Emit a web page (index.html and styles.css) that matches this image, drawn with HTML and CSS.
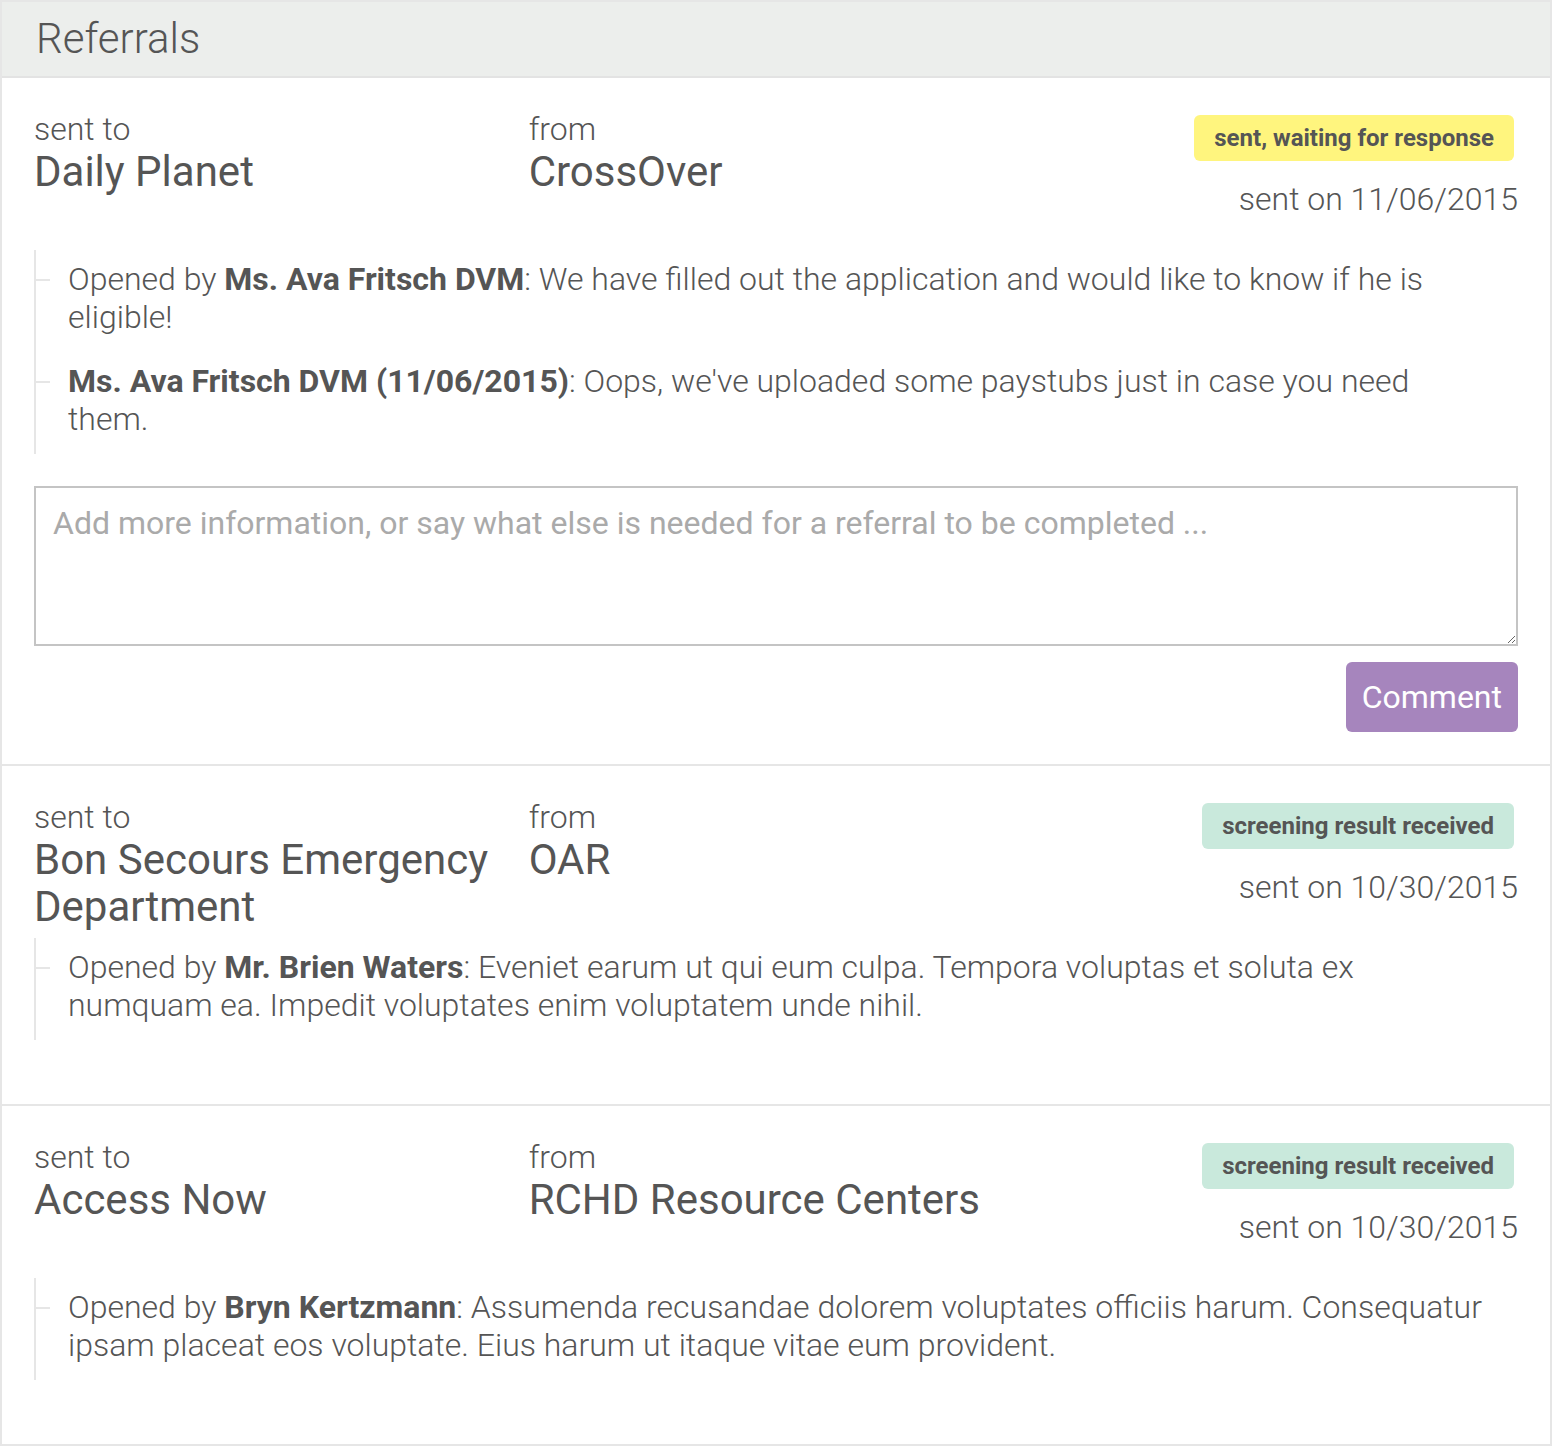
FILE: index.html
```html
<!DOCTYPE html>
<html lang="en">
<head>
<meta charset="utf-8">
<title>Referrals</title>
<link rel="stylesheet" href="styles.css">
</head>
<body>
<section class="panel">
  <header class="panel-header">Referrals</header>

  <article class="referral">
    <div class="ref-head">
      <div class="col">
        <div class="label">sent to</div>
        <div class="name">Daily Planet</div>
      </div>
      <div class="col">
        <div class="label">from</div>
        <div class="name">CrossOver</div>
      </div>
      <div class="col col-status">
        <span class="badge badge-waiting">sent, waiting for response</span>
        <div class="date">sent on 11/06/2015</div>
      </div>
    </div>
    <div class="comments">
      <p class="comment">Opened by <b>Ms. Ava Fritsch DVM</b>: We have filled out the application and would like to know if he is eligible!</p>
      <p class="comment"><b>Ms. Ava Fritsch DVM (11/06/2015)</b>: Oops, we've uploaded some paystubs just in case you need them.</p>
    </div>
    <form class="comment-form">
      <textarea class="comment-input" placeholder="Add more information, or say what else is needed for a referral to be completed ..."></textarea>
      <div class="form-actions">
        <button type="button" class="btn">Comment</button>
      </div>
    </form>
  </article>

  <article class="referral">
    <div class="ref-head">
      <div class="col">
        <div class="label">sent to</div>
        <div class="name">Bon Secours Emergency Department</div>
      </div>
      <div class="col">
        <div class="label">from</div>
        <div class="name">OAR</div>
      </div>
      <div class="col col-status">
        <span class="badge badge-received">screening result received</span>
        <div class="date">sent on 10/30/2015</div>
      </div>
    </div>
    <div class="comments">
      <p class="comment">Opened by <b>Mr. Brien Waters</b>: Eveniet earum ut qui eum culpa. Tempora voluptas et soluta ex numquam ea. Impedit voluptates enim voluptatem unde nihil.</p>
    </div>
  </article>

  <article class="referral">
    <div class="ref-head">
      <div class="col">
        <div class="label">sent to</div>
        <div class="name">Access Now</div>
      </div>
      <div class="col">
        <div class="label">from</div>
        <div class="name">RCHD Resource Centers</div>
      </div>
      <div class="col col-status">
        <span class="badge badge-received">screening result received</span>
        <div class="date">sent on 10/30/2015</div>
      </div>
    </div>
    <div class="comments">
      <p class="comment">Opened by <b>Bryn Kertzmann</b>: Assumenda recusandae dolorem voluptates officiis harum. Consequatur ipsam placeat eos voluptate. Eius harum ut itaque vitae eum provident.</p>
    </div>
  </article>
</section>
</body>
</html>
```

FILE: styles.css
```css
* {
  box-sizing: border-box;
}

html, body {
  margin: 0;
  padding: 0;
  background: #ffffff;
}

body {
  font-family: Roboto, "Liberation Sans", sans-serif;
  color: #555555;
  font-weight: 300;
}

.panel {
  width: 1552px;
  border: 2px solid #e6e6e6;
}

.panel-header {
  height: 76px;
  line-height: 74px;
  padding-left: 34px;
  background: #eceeec;
  border-bottom: 2px solid #e3e3e3;
  font-size: 42px;
  font-weight: 300;
  color: #555555;
}

.referral {
  padding: 32px;
  border-bottom: 2px solid #e6e6e6;
}

.referral:last-child {
  border-bottom: 0;
}

.ref-head {
  display: grid;
  grid-template-columns: 1fr 1fr 1fr;
}

.label {
  font-size: 32px;
  line-height: 38px;
  font-weight: 300;
}

.name {
  font-size: 42px;
  line-height: 47px;
  font-weight: 400;
  padding-right: 8px;
}

.col-status {
  text-align: right;
}

.badge {
  display: inline-block;
  margin-top: 5px;
  margin-right: 4px;
  height: 46px;
  line-height: 46px;
  padding: 0 20px;
  border-radius: 6px;
  font-size: 24px;
  font-weight: 700;
  color: #555555;
}

.badge-waiting {
  background: #fff57e;
}

.badge-received {
  background: #c9e9dc;
}

.date {
  margin-top: 19px;
  margin-bottom: 24px;
  font-size: 32px;
  line-height: 38px;
  font-weight: 300;
}

.comments {
  display: flow-root;
  margin: 8px 0 32px;
  border-left: 2px solid #e6e6e6;
}

.comment {
  position: relative;
  margin: 0 0 16px;
  padding: 10px 30px 0 32px;
  font-size: 32px;
  line-height: 38px;
  font-weight: 300;
}

.comment::before {
  content: "";
  position: absolute;
  left: 0;
  top: 29px;
  width: 14px;
  height: 2px;
  background: #e6e6e6;
}

.comment b {
  font-weight: 700;
}

.comment-form {
  margin: 0;
}

.comment-input {
  display: block;
  width: 100%;
  height: 160px;
  margin: 0;
  padding: 16px 17px;
  border: 2px solid #c4c4c4;
  border-radius: 0;
  font-family: Roboto, "Liberation Sans", sans-serif;
  font-size: 32px;
  line-height: 38px;
  font-weight: 400;
  color: #555555;
  resize: vertical;
}

.comment-input::placeholder {
  color: #aaaaaa;
  opacity: 1;
}

.form-actions {
  margin-top: 16px;
  display: flex;
  justify-content: flex-end;
}

.btn {
  height: 70px;
  padding: 0 16px;
  border: 0;
  border-radius: 6px;
  background: #a685bd;
  color: #ffffff;
  font-family: Roboto, "Liberation Sans", sans-serif;
  font-size: 32px;
  font-weight: 400;
  cursor: pointer;
}
```
